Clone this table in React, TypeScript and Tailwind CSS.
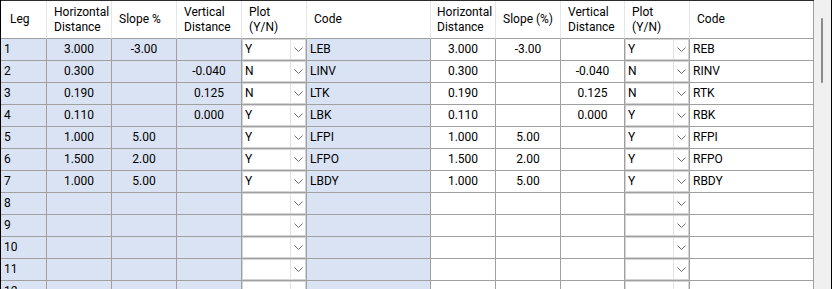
import React from "react";

type Row = {
  leg: number;
  lh: string;
  ls: string;
  lv: string;
  lp: string;
  lc: string;
  rh: string;
  rs: string;
  rv: string;
  rp: string;
  rc: string;
};

const filled: Row[] = [
  { leg: 1, lh: "3.000", ls: "-3.00", lv: "", lp: "Y", lc: "LEB", rh: "3.000", rs: "-3.00", rv: "", rp: "Y", rc: "REB" },
  { leg: 2, lh: "0.300", ls: "", lv: "-0.040", lp: "N", lc: "LINV", rh: "0.300", rs: "", rv: "-0.040", rp: "N", rc: "RINV" },
  { leg: 3, lh: "0.190", ls: "", lv: "0.125", lp: "N", lc: "LTK", rh: "0.190", rs: "", rv: "0.125", rp: "N", rc: "RTK" },
  { leg: 4, lh: "0.110", ls: "", lv: "0.000", lp: "Y", lc: "LBK", rh: "0.110", rs: "", rv: "0.000", rp: "Y", rc: "RBK" },
  { leg: 5, lh: "1.000", ls: "5.00", lv: "", lp: "Y", lc: "LFPI", rh: "1.000", rs: "5.00", rv: "", rp: "Y", rc: "RFPI" },
  { leg: 6, lh: "1.500", ls: "2.00", lv: "", lp: "Y", lc: "LFPO", rh: "1.500", rs: "2.00", rv: "", rp: "Y", rc: "RFPO" },
  { leg: 7, lh: "1.000", ls: "5.00", lv: "", lp: "Y", lc: "LBDY", rh: "1.000", rs: "5.00", rv: "", rp: "Y", rc: "RBDY" },
];

const rows: Row[] = [
  ...filled,
  ...[8, 9, 10, 11, 12].map((n) => ({
    leg: n, lh: "", ls: "", lv: "", lp: "", lc: "", rh: "", rs: "", rv: "", rp: "", rc: "",
  })),
];

const headers = [
  { label: ["Leg"], cls: "pl-[9px]" },
  { label: ["Horizontal", "Distance"], cls: "pl-[7px]" },
  { label: ["Slope %"], cls: "pl-[7px]" },
  { label: ["Vertical", "Distance"], cls: "pl-[7px]" },
  { label: ["Plot", "(Y/N)"], cls: "pl-[7px]" },
  { label: ["Code"], cls: "pl-[7px]" },
  { label: ["Horizontal", "Distance"], cls: "pl-[6px]" },
  { label: ["Slope (%)"], cls: "pl-[7px]" },
  { label: ["Vertical", "Distance"], cls: "pl-[7px]" },
  { label: ["Plot", "(Y/N)"], cls: "pl-[7px]" },
  { label: ["Code"], cls: "pl-[7px]" },
];

function Chevron() {
  return (
    <svg width="9" height="5" viewBox="0 0 9 5" className="block">
      <path d="M0.5 0.5 L4.5 4.5 L8.5 0.5" fill="none" stroke="#6d6d6d" strokeWidth="1" />
    </svg>
  );
}

function ComboCell({ value }: { value: string }) {
  return (
    <div className="border-b border-r border-[#a0a0a0] bg-white">
      <div className="flex h-full border border-[#d4d4d4]">
        <div className="flex flex-1 items-center pl-[2px]">{value}</div>
        <div className="flex w-[15px] items-center justify-center border-l border-[#e3e3e3]">
          <Chevron />
        </div>
      </div>
    </div>
  );
}

function Cell({
  children,
  blue,
  align = "center",
}: {
  children?: React.ReactNode;
  blue?: boolean;
  align?: "center" | "left";
}) {
  return (
    <div
      className={
        "flex items-center whitespace-nowrap border-b border-r border-[#a0a0a0] " +
        (blue ? "bg-[#dae3f3] " : "bg-white ") +
        (align === "center" ? "justify-center" : "justify-start pl-[3px]")
      }
    >
      {children}
    </div>
  );
}

export default function App() {
  return (
    <div
      className="flex h-[289px] w-[832px] overflow-hidden border-l border-r border-black bg-white text-[12px] leading-[15px] text-black"
      style={{ fontFamily: "Roboto, 'Liberation Sans', sans-serif" }}
    >
      <div className="w-[813px] border-t border-[#2b2b2b]">
        <div className="grid grid-cols-[46px_65px_65px_65px_65px_124px_65px_65px_64px_65px_124px] auto-rows-[22px] [grid-template-rows:38px]">
          {headers.map((h, i) => (
            <div
              key={i}
              className={
                "flex h-[38px] flex-col justify-center border-b border-b-[#a0a0a0] bg-white " +
                (i === headers.length - 1 ? "border-r border-r-[#a0a0a0] " : "border-r border-r-[#e5e5e5] ") +
                h.cls
              }
            >
              {h.label.map((l) => (
                <span key={l} className="whitespace-nowrap">
                  {l}
                </span>
              ))}
            </div>
          ))}
          {rows.map((r) => (
            <React.Fragment key={r.leg}>
              <Cell blue align="left">
                {r.leg}
              </Cell>
              <Cell blue>{r.lh}</Cell>
              <Cell blue>{r.ls}</Cell>
              <Cell blue>{r.lv}</Cell>
              <ComboCell value={r.lp} />
              <Cell blue align="left">
                {r.lc}
              </Cell>
              <Cell>{r.rh}</Cell>
              <Cell>{r.rs}</Cell>
              <Cell>{r.rv}</Cell>
              <ComboCell value={r.rp} />
              <Cell align="left">{r.rc}</Cell>
            </React.Fragment>
          ))}
        </div>
      </div>
      <div className="flex-1 bg-[#f0f0f0] pl-[7px] pt-[18px]">
        <div className="h-[65px] w-[2px] rounded-full bg-[#8a8a8a]" />
      </div>
    </div>
  );
}
